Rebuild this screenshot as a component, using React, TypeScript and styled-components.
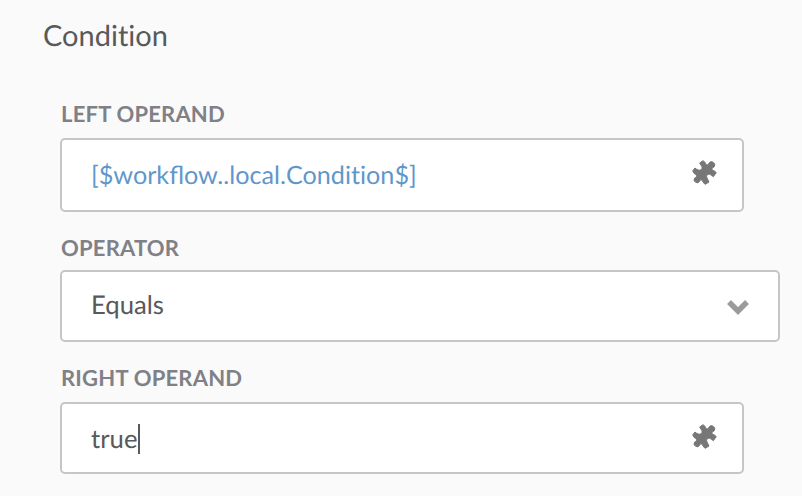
import React from "react";
import styled, { createGlobalStyle } from "styled-components";

const Global = createGlobalStyle`
  * { box-sizing: border-box; }
  body {
    margin: 0;
    background: #fafafa;
    font-family: Lato, sans-serif;
    text-rendering: geometricPrecision;
  }
`;

const Page = styled.main`
  height: 496px;
  padding: 18px 22px 0 43px;
  overflow: hidden;
  background: #fafafa;
`;

const Title = styled.h1`
  margin: 0 0 48px;
  font-size: 29px;
  line-height: 36px;
  font-weight: 400;
  font-variant-ligatures: none;
  color: #58595b;
`;

const Form = styled.div`
  display: flex;
  flex-direction: column;
  padding-left: 17px;
`;

const Label = styled.label<{ $height: number }>`
  height: ${(p) => p.$height}px;
  padding-left: 1px;
  font-size: 22px;
  line-height: 24px;
  letter-spacing: 0.2px;
  font-weight: 700;
  color: #808087;
`;

const Field = styled.div<{ $width: number; $height: number; $gap?: number }>`
  display: flex;
  align-items: center;
  justify-content: space-between;
  width: ${(p) => p.$width}px;
  height: ${(p) => p.$height}px;
  margin-bottom: ${(p) => p.$gap ?? 0}px;
  padding: 0 25px 0 29px;
  border: 2px solid #c5c5ca;
  border-radius: 5px;
  background: #fff;
`;

const Value = styled.span<{ $link?: boolean; $lift?: number }>`
  display: flex;
  align-items: center;
  margin-bottom: ${(p) => p.$lift ?? 0}px;
  font-size: ${(p) => (p.$link ? 25.2 : 25.7)}px;
  line-height: 30px;
  color: ${(p) => (p.$link ? "#5f97cb" : "#58595b")};
`;

const Plain = styled.span`
  font-variant-ligatures: none;
`;

const Caret = styled.i`
  width: 2px;
  height: 30px;
  margin-left: 0.6px;
  background: #58595b;
`;

const PuzzleSvg = styled.svg<{ $lift: number }>`
  width: 25px;
  height: 25px;
  margin-bottom: ${(p) => p.$lift}px;
`;

const ChevronSvg = styled.svg`
  width: 24px;
  height: 18px;
  margin: 2px 3px 0 0;
`;

const Puzzle = ({ lift }: { lift: number }) => (
  <PuzzleSvg $lift={lift} viewBox="0 0 75 75" fill="#777" stroke="#777" strokeWidth="3" strokeLinejoin="round">
    <path d="M2 33L9 24Q14 29 19 30C27 32 33 26 29 19L23 9L33 2L40 8C41 15 49 18 51 9A8.500 8.500 0 1 1 66 21C57 24 59 31 66 32L73 38L64 50L56 44C48 40 41 46 45 54L51 66L40 73L33 67C32 60 25 56 23 64A8.500 8.500 0 1 1 8 54C16 51 15 44 8 42Z" />
  </PuzzleSvg>
);

const Chevron = () => (
  <ChevronSvg viewBox="0 0 24 18" fill="none" stroke="#9b9b9d" strokeWidth="5.500">
    <path d="M3 4l9 9 9-9" />
  </ChevronSvg>
);

export default function App() {
  return (
    <Page>
      <Global />
      <Title>Condition</Title>
      <Form>
        <Label $height={36}>LEFT OPERAND</Label>
        <Field $width={684} $height={74} $gap={24}>
          <Value $link>[$workflow..local.<Plain>Condition$]</Plain></Value>
          <Puzzle lift={5} />
        </Field>
        <Label $height={34}>OPERATOR</Label>
        <Field $width={720} $height={72} $gap={24}>
          <Value $lift={3}>Equals</Value>
          <Chevron />
        </Field>
        <Label $height={36}>RIGHT OPERAND</Label>
        <Field $width={684} $height={72}>
          <Value $lift={-1}>true<Caret /></Value>
          <Puzzle lift={4} />
        </Field>
      </Form>
    </Page>
  );
}
